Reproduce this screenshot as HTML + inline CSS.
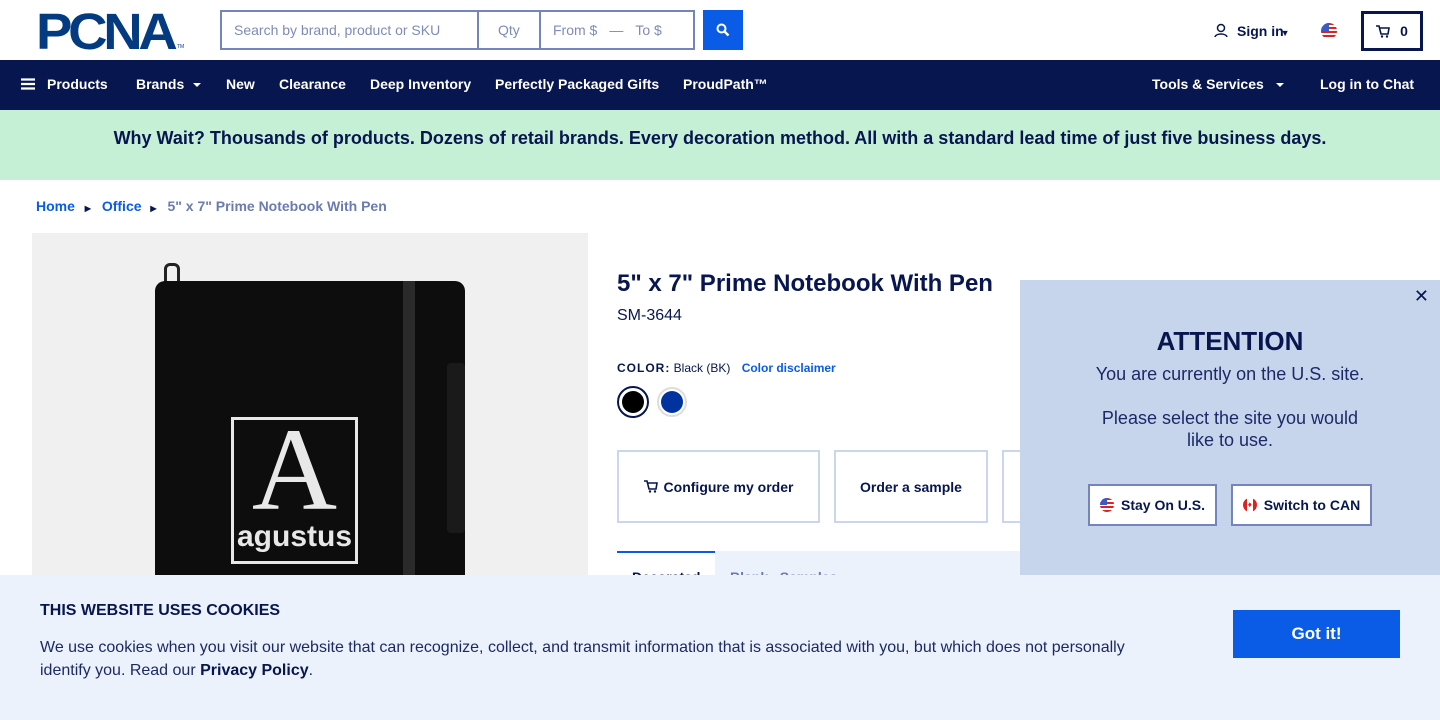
<!DOCTYPE html>
<html><head><meta charset="utf-8">
<style>
*{box-sizing:border-box;margin:0;padding:0}
body{width:1440px;height:720px;overflow:hidden;font-family:"Liberation Sans",sans-serif;background:#fff;position:relative;color:#07164f}
.abs{position:absolute}
.search{left:220px;top:10px;width:475px;height:40px;border:2px solid #7585bb;display:flex;font-size:14px;color:#7f8bb8}
.search div{display:flex;align-items:center;padding-left:12px;height:100%}
.nav{top:60px;left:0;width:1440px;height:50px;background:#07164f;color:#fff;font-weight:bold;font-size:14px}
.nav span{position:absolute;top:16px}
.caret{display:inline-block;border-left:4px solid transparent;border-right:4px solid transparent;border-top:4px solid #fff;margin-left:9px;vertical-align:middle}
.banner{top:110px;left:0;width:1440px;height:70px;background:#c6f0d6;font-weight:bold;font-size:18px;text-align:center;line-height:56px;color:#07164f}
.bc{top:198px;left:36px;font-size:14px;font-weight:bold;color:#0a5ce6}
.btn{border:2px solid #c9d6ec;height:73px;top:450px;display:flex;align-items:center;justify-content:center;font-weight:bold;font-size:14px;background:#fff}
.pop{left:1020px;top:280px;width:420px;height:295px;background:#c6d5ec;text-align:center}
.pb{position:absolute;top:204px;height:42px;border:2px solid #7585bb;background:#fff;font-weight:bold;font-size:14px;display:flex;align-items:center;justify-content:center;gap:7px}
.cookie{left:0;top:575px;width:1440px;height:145px;background:#ebf2fb}
</style></head><body>
<div class="abs" style="left:36px;top:11px;font-weight:900;font-size:51px;color:#033a80;letter-spacing:-4px;line-height:42px;transform:scaleX(1.07);transform-origin:left">PCNA</div>
<div class="abs" style="left:177px;top:44px;font-size:5px;color:#033a80">TM</div>
<div class="abs search"><div style="width:257px;border-right:2px solid #7585bb">Search by brand, product or SKU</div><div style="width:62px;border-right:2px solid #7585bb;padding-left:19px">Qty</div><div style="flex:1">From $ <span style="margin:0 12px;color:#7f8bb8">—</span> To $</div></div>
<div class="abs" style="left:703px;top:10px;width:40px;height:40px;background:#0a5ce6"><svg width="40" height="40"><circle cx="18.5" cy="18.5" r="4" stroke="#fff" stroke-width="2" fill="none"/><path d="M21.5 21.5l4 4" stroke="#fff" stroke-width="2.4"/></svg></div>
<svg class="abs" style="left:1213px;top:23px" width="16" height="16"><circle cx="8" cy="5" r="3.5" stroke="#07164f" stroke-width="1.5" fill="none"/><path d="M2 14c1-4 11-4 12 0" stroke="#07164f" stroke-width="1.5" fill="none"/></svg>
<div class="abs" style="left:1237px;top:23px;font-weight:bold;font-size:14px">Sign in<span style="font-size:9px;margin-left:-3px">▼</span></div>
<div class="abs" style="left:1321px;top:23px;width:16px;height:16px;border-radius:50%;background:repeating-linear-gradient(#d22 0 2px,#fff 2px 4px);overflow:hidden"><div style="width:8px;height:8px;background:#3a5bc7"></div></div>
<div class="abs" style="left:1361px;top:11px;width:62px;height:40px;border:3px solid #07164f;display:flex;align-items:center;justify-content:center;gap:10px;font-weight:bold;font-size:14px"><svg width="14" height="13"><path d="M0 1h3l2 8h7l1-6H4" stroke="#07164f" stroke-width="1.6" fill="none"/><circle cx="6" cy="11.5" r="1.2" fill="#07164f"/><circle cx="11" cy="11.5" r="1.2" fill="#07164f"/></svg>0</div>
<div class="abs nav">
<span style="left:21px"><svg width="14" height="12" style="vertical-align:-1px;margin-right:12px"><path d="M0 1.5h14M0 6h14M0 10.5h14" stroke="#fff" stroke-width="2.2"/></svg>Products</span>
<span style="left:136px">Brands<i class="caret"></i></span>
<span style="left:226px">New</span><span style="left:279px">Clearance</span><span style="left:370px">Deep Inventory</span><span style="left:495px">Perfectly Packaged Gifts</span><span style="left:683px">ProudPath™</span>
<span style="left:1152px">Tools &amp; Services<i class="caret" style="margin-left:12px"></i></span><span style="left:1320px">Log in to Chat</span>
</div>
<div class="abs banner">Why Wait? Thousands of products. Dozens of retail brands. Every decoration method. All with a standard lead time of just five business days.</div>
<div class="abs bc">Home <span style="font-size:8px;margin:0 7px 0 6px;color:#07164f">▶</span> Office <span style="font-size:8px;margin:0 7px 0 5px;color:#07164f">▶</span> <span style="color:#6b7bb0">5" x 7" Prime Notebook With Pen</span></div>
<div class="abs" style="left:32px;top:233px;width:556px;height:342px;background:#f0f0f0;overflow:hidden">
<div class="abs" style="left:132px;top:30px;width:16px;height:26px;border:3px solid #222;border-radius:6px"></div>
<div class="abs" style="left:123px;top:48px;width:310px;height:320px;background:#0d0d0d;border-radius:10px"></div>
<div class="abs" style="left:371px;top:48px;width:12px;height:300px;background:#2a2a2a"></div>
<div class="abs" style="left:415px;top:130px;width:18px;height:170px;background:#1a1a1a;border-radius:4px"></div>
<div class="abs" style="left:199px;top:184px;width:127px;height:147px;border:3px solid #e8e8e8;color:#e8e8e8;text-align:center">
<div style="font-family:'Liberation Serif',serif;font-size:118px;line-height:100px">A</div>
<div style="font-weight:bold;font-size:30px;line-height:34px">agustus</div></div>
</div>
<div class="abs" style="left:617px;top:270px;font-size:24px;font-weight:bold">5" x 7" Prime Notebook With Pen</div>
<div class="abs" style="left:617px;top:307px;font-size:16px">SM-3644</div>
<div class="abs" style="left:617px;top:361px;font-size:12px"><b style="letter-spacing:1px">COLOR:</b> Black (BK) <b style="color:#0a5ce6;margin-left:8px">Color disclaimer</b></div>
<div class="abs" style="left:617px;top:386px;width:32px;height:32px;border-radius:50%;border:2px solid #07164f;padding:3px"><div style="width:100%;height:100%;border-radius:50%;background:#000"></div></div>
<div class="abs" style="left:657px;top:387px;width:30px;height:30px;border-radius:50%;border:2px solid #ddd;padding:2px"><div style="width:100%;height:100%;border-radius:50%;background:#0033a0"></div></div>
<div class="abs btn" style="left:617px;width:203px"><svg width="15" height="13" style="margin-right:5px"><path d="M0 1h3l2 8h7l1-6H4" stroke="#07164f" stroke-width="1.6" fill="none"/><circle cx="6" cy="11.5" r="1.2" fill="#07164f"/><circle cx="11" cy="11.5" r="1.2" fill="#07164f"/></svg>Configure my order</div>
<div class="abs btn" style="left:834px;width:154px">Order a sample</div>
<div class="abs btn" style="left:1002px;width:60px"></div>
<div class="abs" style="left:617px;top:551px;width:420px;height:24px;background:#ebf2fb"></div>
<div class="abs" style="left:617px;top:551px;width:98px;height:24px;background:#fff;border-top:2px solid #0a5ce6"></div>
<div class="abs" style="left:632px;top:570px;font-size:14px;font-weight:bold;height:5px;overflow:hidden;line-height:14px">Decorated</div>
<div class="abs" style="left:730px;top:570px;font-size:14px;font-weight:bold;height:5px;overflow:hidden;line-height:14px;color:#6b7bb0">Blank &nbsp; Samples</div>
<div class="abs pop">
<div style="position:absolute;right:11px;top:6px;font-size:18px">✕</div>
<div style="margin-top:46px;font-size:26px;font-weight:bold">ATTENTION</div>
<div style="font-size:18px;line-height:22px;margin-top:6px;color:#1b2a66">You are currently on the U.S. site.<br><br>Please select the site you would<br>like to use.</div>
<div class="pb" style="left:68px;width:129px"><span style="width:14px;height:14px;border-radius:50%;background:repeating-linear-gradient(#d22 0 2px,#fff 2px 4px);overflow:hidden;display:inline-block"><i style="display:block;width:7px;height:7px;background:#3a5bc7"></i></span>Stay On U.S.</div>
<div class="pb" style="left:211px;width:141px"><span style="width:14px;height:14px;border-radius:50%;background:linear-gradient(90deg,#d22 0 4px,#fff 4px 10px,#d22 10px);display:inline-block;text-align:center;color:#d22;font-size:8px;line-height:14px">♦</span>Switch to CAN</div>
</div>
<div class="abs cookie">
<div class="abs" style="left:40px;top:27px;font-size:16px;font-weight:bold">THIS WEBSITE USES COOKIES</div>
<div class="abs" style="left:40px;top:61px;width:1100px;font-size:16px;line-height:23px;color:#1b2a66">We use cookies when you visit our website that can recognize, collect, and transmit information that is associated with you, but which does not personally identify you. Read our <b style="color:#07164f">Privacy Policy</b>.</div>
<div class="abs" style="left:1233px;top:35px;width:167px;height:48px;background:#0a5ce6;color:#fff;font-weight:bold;font-size:17px;display:flex;align-items:center;justify-content:center">Got it!</div>
</div>
</body></html>
